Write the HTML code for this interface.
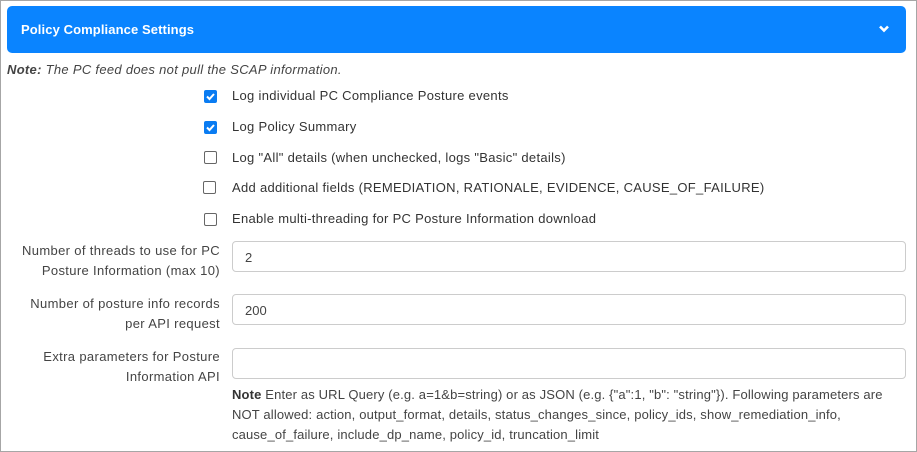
<!DOCTYPE html>
<html><head><style>
body{margin:0;width:917px;height:452px;overflow:hidden;background:#fff;font-family:"Liberation Sans",sans-serif;color:#333;}
.frame{position:absolute;left:0;top:0;width:915px;height:450px;border:1px solid #a6a6a6;}
.hdr{position:absolute;left:7px;top:6px;width:899px;height:47px;background:#0a84ff;border-radius:5px;}
.hdr span{position:absolute;left:14px;top:16px;color:#fff;font-weight:bold;font-size:13px;letter-spacing:0.1px;}
.hdr svg{position:absolute;right:16px;top:19px;}
.t{position:absolute;font-size:13px;white-space:nowrap;letter-spacing:0.3px;}
.cb{position:absolute;left:204px;width:13px;height:13px;border-radius:2px;box-sizing:border-box;}
.on{background:#0a7cf2;}
.off{border:1px solid #666;background:#fff;}
.lbl{position:absolute;right:697px;text-align:right;font-size:13px;line-height:20px;color:#444;letter-spacing:0.35px;white-space:nowrap;}
.in{position:absolute;left:232px;width:674px;height:31px;border:1px solid #ccc;border-radius:4px;box-sizing:border-box;font-size:13px;padding:8px 12px;color:#444;}
</style></head><body>
<div class="frame"></div>
<div class="hdr"><span>Policy Compliance Settings</span>
<svg width="12" height="8" viewBox="0 0 12 8"><path d="M2 1.5 L6 5.5 L10 1.5" stroke="#fff" stroke-width="2.6" fill="none"/></svg></div>
<div class="t" style="left:7px;top:62px;font-style:italic;color:#444"><b>Note:</b> The PC feed does not pull the SCAP information.</div>

<div class="cb on" style="top:90px"><svg width="13" height="13"><path d="M3 6.5 L5.5 9 L10 4" stroke="#fff" stroke-width="2" fill="none"/></svg></div>
<div class="t" style="left:232px;top:88px">Log individual PC Compliance Posture events</div>
<div class="cb on" style="top:121px"><svg width="13" height="13"><path d="M3 6.5 L5.5 9 L10 4" stroke="#fff" stroke-width="2" fill="none"/></svg></div>
<div class="t" style="left:232px;top:119px">Log Policy Summary</div>
<div class="cb off" style="top:151px"></div>
<div class="t" style="left:232px;top:150px">Log "All" details (when unchecked, logs "Basic" details)</div>
<div class="cb off" style="top:181px;left:203px"></div>
<div class="t" style="left:232px;top:180px">Add additional fields (REMEDIATION, RATIONALE, EVIDENCE, CAUSE_OF_FAILURE)</div>
<div class="cb off" style="top:213px"></div>
<div class="t" style="left:232px;top:211px">Enable multi-threading for PC Posture Information download</div>

<div class="lbl" style="top:241px">Number of threads to use for PC<br>Posture Information (max 10)</div>
<div class="in" style="top:241px">2</div>
<div class="lbl" style="top:294px">Number of posture info records<br>per API request</div>
<div class="in" style="top:294px">200</div>
<div class="lbl" style="top:347px">Extra parameters for Posture<br>Information API</div>
<div class="in" style="top:348px"></div>
<div class="t" style="left:232px;top:385px;line-height:20px;color:#444;letter-spacing:0.15px"><b style="color:#333">Note</b> Enter as URL Query (e.g. a=1&amp;b=string) or as JSON (e.g. {"a":1, "b": "string"}). Following parameters are<br>NOT allowed: action, output_format, details, status_changes_since, policy_ids, show_remediation_info,<br>cause_of_failure, include_dp_name, policy_id, truncation_limit</div>
</body></html>
